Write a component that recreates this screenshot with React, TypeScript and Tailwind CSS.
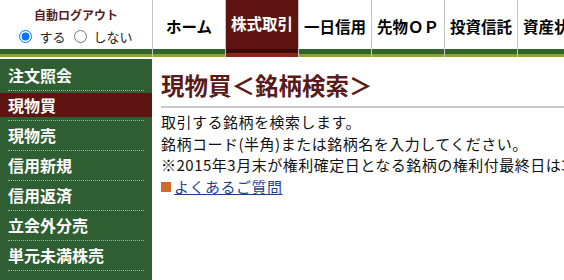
import type { ReactNode } from 'react'

const jp = { fontFamily: '"Noto Sans CJK JP", "Noto Sans", sans-serif' }

const tabs = ['ホーム', '株式取引', '一日信用', '先物ＯＰ', '投資信託', '資産状況']
const menu = ['注文照会', '現物買', '現物売', '信用新規', '信用返済', '立会外分売', '単元未満株売']

function Tab({ label, active }: { label: string; active: boolean }) {
    return (
        <div
            className={`flex w-[73px] shrink-0 flex-col border-l ${active ? 'border-[#d8c29c]' : 'border-[#c4c4c4]'}`}
        >
            <div
                className={`flex h-[49px] items-center justify-center text-[15.5px] font-bold whitespace-nowrap ${active ? 'bg-[#5e1511] pb-[2px] text-white' : 'pt-[5px] text-black'
                    }`}
            >
                {label}
            </div>
            {active ? (
                <>
                    <div className="h-[4px] bg-[#3c0a07]" />
                    <div className="h-[4px] bg-[#8e2420]" />
                </>
            ) : (
                <>
                    <div className="h-[5px] bg-[#33622c]" />
                    <div className="h-[3px] bg-[#8ba42b]" />
                </>
            )}
        </div>
    )
}

function MenuItem({ label, active }: { label: string; active: boolean }): ReactNode {
    return (
        <div className="h-[30px] pt-[2px]">
            <div
                className={`flex h-[24px] items-center pl-[8px] text-[16px] font-bold text-white ${active ? 'bg-[#5e1511]' : ''}`}
            >
                {label}
            </div>
            <div className="mx-[8px] mt-[3px] border-b border-dotted border-[#9db89a]" />
        </div>
    )
}

export default function App() {
    return (
        <div className="h-[280px] w-[564px] overflow-hidden bg-white" style={jp}>
            {/* header */}
            <div className="flex">
                <div className="flex w-[152px] shrink-0 flex-col">
                    <div className="flex h-[49px] flex-col items-center pt-[5px]">
                        <div className="text-[12px] font-bold leading-[20px] text-[#5a1c1c]">自動ログアウト</div>
                        <div className="mt-[2px] flex items-center text-[13px] text-[#222]">
                            <label className="flex items-center">
                                <input type="radio" name="logout" defaultChecked className="m-0 mr-[7px] h-[13px] w-[13px]" />
                                する
                            </label>
                            <label className="ml-[8px] flex items-center">
                                <input type="radio" name="logout" className="m-0 mr-[7px] h-[13px] w-[13px]" />
                                しない
                            </label>
                        </div>
                    </div>
                    <div className="h-[5px] bg-[#33622c]" />
                    <div className="h-[3px] bg-[#8ba42b]" />
                </div>
                {tabs.map((t) => (
                    <Tab key={t} label={t} active={t === '株式取引'} />
                ))}
            </div>

            <div className="mt-[2px] flex h-[223px]">
                {/* side menu */}
                <div className="w-[152px] shrink-0 bg-[#2f5e33] pt-[2px]">
                    {menu.map((m) => (
                        <MenuItem key={m} label={m} active={m === '現物買'} />
                    ))}
                </div>

                {/* main */}
                <div className="min-w-0 flex-1 pl-[9px] pt-[12px]">
                    <h1 className="border-b-2 border-[#c8c8c8] pb-[7px] text-[23.5px] leading-[28px] font-bold text-[#5a1a1a]">
                        現物買＜銘柄検索＞
                    </h1>
                    <div className="mt-[3px] text-[15px] leading-[21.7px] tracking-[0.5px] whitespace-nowrap text-[#111]">
                        <p>取引する銘柄を検索します。</p>
                        <p>銘柄コード(半角)または銘柄名を入力してください。</p>
                        <p>※2015年3月末が権利確定日となる銘柄の権利付最終日は3月26日です。</p>
                        <p className="flex items-center">
                            <span className="mr-[3px] inline-block h-[10px] w-[10px] bg-[#cf6a2a]" />
                            <a href="#" className="text-[#1d3f94] underline">
                                よくあるご質問
                            </a>
                        </p>
                    </div>
                </div>
            </div>
        </div>
    )
}
